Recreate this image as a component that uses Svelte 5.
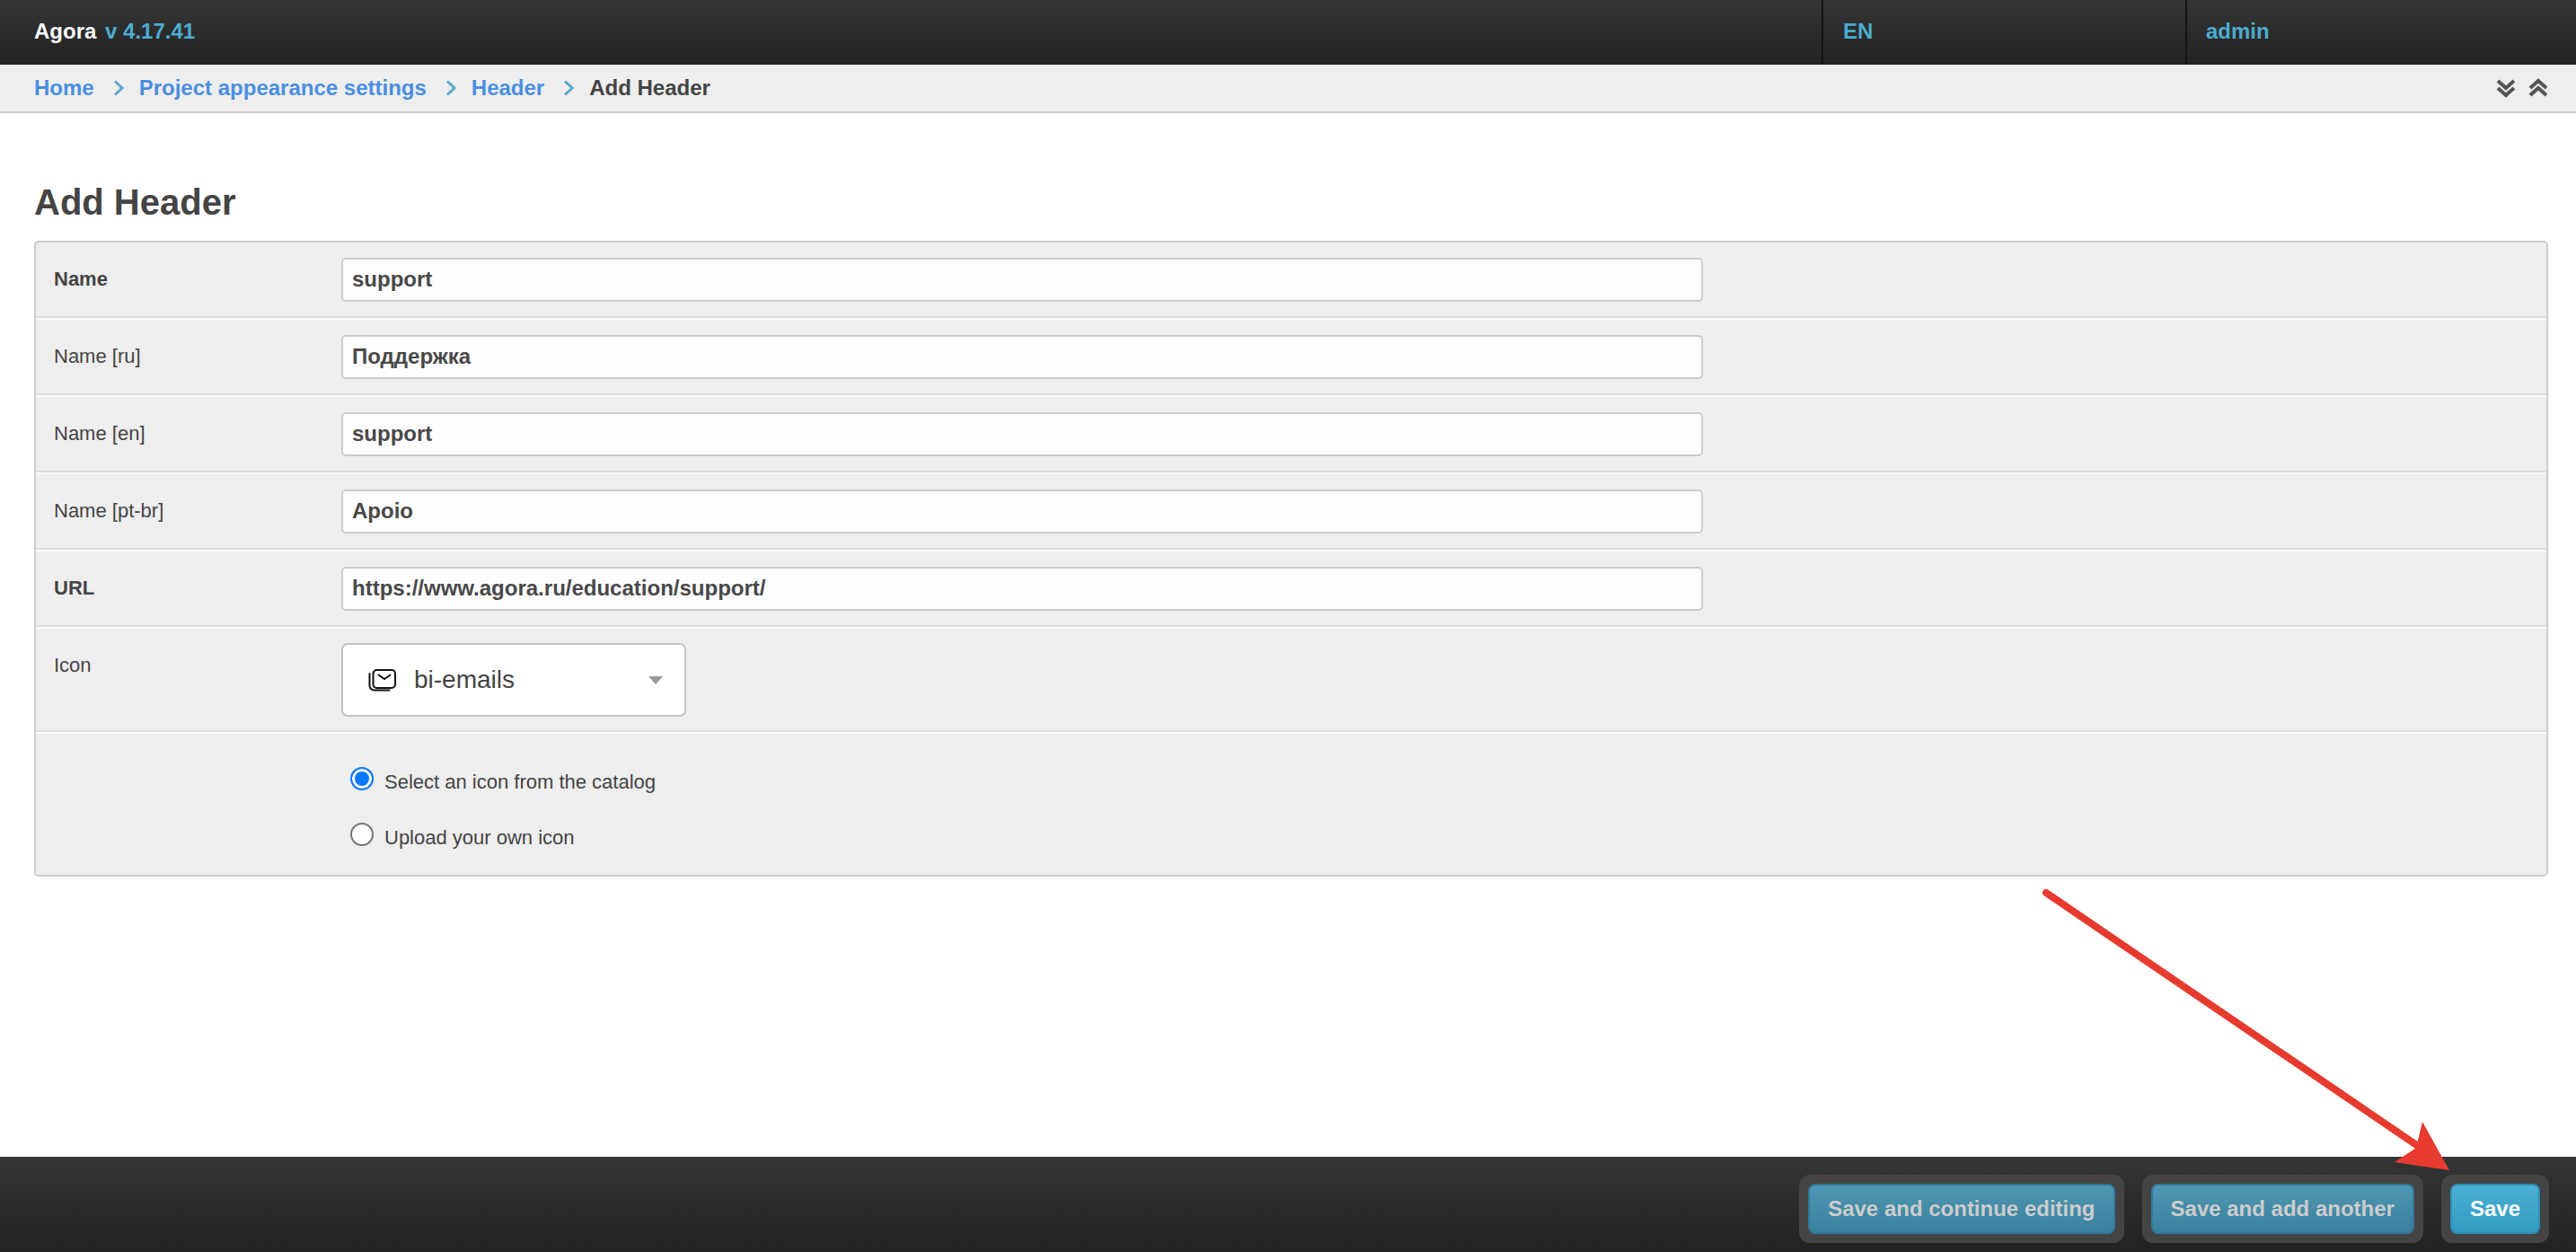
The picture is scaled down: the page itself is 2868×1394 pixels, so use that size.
<script>
	let crumbs = ["Home", "Project appearance settings", "Header"];
	let rows = [
		{ label: "Name", value: "support", strong: true },
		{ label: "Name [ru]", value: "Поддержка" },
		{ label: "Name [en]", value: "support" },
		{ label: "Name [pt-br]", value: "Apoio" },
		{ label: "URL", value: "https://www.agora.ru/education/support/", strong: true },
	];
	let source = $state("catalog");
</script>

<div class="page">
	<header class="topbar">
		<div class="brand"><span class="title">Agora</span> <span class="version">v 4.17.41</span></div>
		<a class="topLink lang" href="#en">EN</a>
		<a class="topLink user" href="#admin">admin</a>
	</header>

	<nav class="breadcrumbs">
		{#each crumbs as crumb}
			<a href="#crumb">{crumb}</a>
			<svg class="sep" viewBox="0 0 12 18" width="12" height="18"><path d="M2 1.5l8 7.5-8 7.5" /></svg>
		{/each}
		<span class="current">Add Header</span>
		<div class="collapse">
			<svg viewBox="0 0 22 22" width="22" height="22"><path d="M2 3l9 8 9-8M2 11l9 8 9-8" /></svg>
			<svg viewBox="0 0 22 22" width="22" height="22"><path d="M2 11l9-8 9 8M2 19l9-8 9 8" /></svg>
		</div>
	</nav>

	<main class="content">
		<h1>Add Header</h1>
		<form class="panel">
			{#each rows as row}
				<div class="row">
					<label class="label" class:strong={row.strong} for={row.label}>{row.label}</label>
					<input id={row.label} class="text" type="text" value={row.value} />
				</div>
			{/each}
			<div class="row iconRow">
				<span class="label">Icon</span>
				<div class="select">
					<svg class="mail" viewBox="0 0 31 25" width="31" height="25">
						<rect x="5.5" y="1" width="24.5" height="20" rx="4" />
						<path d="M11.5 6.5l6.5 4.5 6.5-4.5" />
						<path d="M1.5 5v13.5a5 5 0 0 0 5 5h17" />
					</svg>
					<span class="selectText">bi-emails</span>
					<span class="caret"></span>
				</div>
			</div>
			<div class="row radios">
				<label class="radio"><input type="radio" bind:group={source} value="catalog" /><span>Select an icon from the catalog</span></label>
				<label class="radio"><input type="radio" bind:group={source} value="upload" /><span>Upload your own icon</span></label>
			</div>
		</form>
	</main>

	<footer class="actions">
		<div class="well"><button class="btn muted" type="button">Save and continue editing</button></div>
		<div class="well"><button class="btn muted" type="button">Save and add another</button></div>
		<div class="well"><button class="btn" type="button">Save</button></div>
	</footer>

	<!-- annotation arrow drawn over the page -->
	<svg class="arrow" viewBox="0 0 2868 1394" width="2868" height="1394">
		<line x1="2278" y1="994" x2="2692" y2="1276" />
		<polygon points="2697,1249 2727,1303 2666,1294 2690,1278" />
	</svg>
</div>

<style>
	:global(body) {
		margin: 0;
		background: #fff;
	}

	.page {
		position: relative;
		display: flex;
		flex-direction: column;
		height: 1394px;
		overflow: hidden;
		font-family: "Liberation Sans", Arial, sans-serif;
		color: #444;
	}

	.topbar {
		display: flex;
		align-items: stretch;
		height: 72px;
		flex-shrink: 0;
		background: linear-gradient(#353535, #222);
		font-size: 24px;
		font-weight: bold;
		line-height: 70px;
	}

	.brand {
		width: 2028px;
		padding-left: 38px;
		box-sizing: border-box;
	}

	.title {
		color: #fff;
	}

	.version {
		margin-left: 3px;
		color: #4bacd0;
	}

	.topLink {
		box-sizing: border-box;
		border-left: 2px solid #151515;
		color: #4bacd0;
		text-decoration: none;
	}

	.lang {
		width: 405px;
		padding-left: 22px;
	}

	.user {
		flex: 1;
		padding-left: 21px;
	}

	.breadcrumbs {
		display: flex;
		align-items: center;
		height: 54px;
		flex-shrink: 0;
		box-sizing: border-box;
		padding: 0 31px 0 38px;
		background: #eee;
		border-bottom: 2px solid #ccc;
		font-size: 24px;
		font-weight: bold;
	}

	.breadcrumbs a {
		color: #4a8fe0;
		text-decoration: none;
	}

	.sep {
		margin: 0 17px 0 21px;
		fill: none;
		stroke: #5aa9cc;
		stroke-width: 3;
	}

	.current {
		color: #444;
	}

	.collapse {
		display: flex;
		gap: 14px;
		margin-left: auto;
	}

	.collapse svg {
		fill: none;
		stroke: #555;
		stroke-width: 4;
	}

	.content {
		flex: 1;
		padding: 0 31px 0 38px;
	}

	h1 {
		margin: 0;
		padding-top: 76px;
		font-size: 40px;
		line-height: 46px;
		color: #444;
	}

	.panel {
		margin-top: 20px;
		box-sizing: border-box;
		border: 2px solid #ccc;
		border-radius: 5px;
		background: #eee;
	}

	.row {
		display: flex;
		align-items: center;
		box-sizing: border-box;
		height: 84px;
		margin-bottom: 2px;
		padding-left: 20px;
		border-bottom: 2px solid #ddd;
		box-shadow: 0 2px 0 #fafafa;
	}

	.label {
		width: 320px;
		flex-shrink: 0;
		font-size: 22px;
		color: #444;
	}

	.strong {
		font-weight: bold;
	}

	.text {
		width: 1516px;
		height: 49px;
		box-sizing: border-box;
		padding: 0 10px;
		border: 2px solid #ccc;
		border-radius: 5px;
		background: #fdfdfd;
		font: bold 24px "Liberation Sans", Arial, sans-serif;
		color: #484848;
		outline: none;
	}

	.iconRow {
		align-items: flex-start;
		height: 115px;
		padding-top: 28px;
	}

	.iconRow .label {
		line-height: 26px;
	}

	.select {
		display: flex;
		align-items: center;
		width: 384px;
		height: 82px;
		margin-top: -12px;
		box-sizing: border-box;
		padding: 0 24px 0 28px;
		border: 2px solid #c4c4c4;
		border-radius: 7px;
		background: #fff;
	}

	.mail {
		fill: none;
		stroke: #111;
		stroke-width: 2;
		stroke-linecap: round;
	}

	.selectText {
		margin-left: 20px;
		font-size: 28px;
		color: #444;
	}

	.caret {
		margin-left: auto;
		border-top: 9px solid #999;
		border-left: 8px solid transparent;
		border-right: 8px solid transparent;
	}

	.radios {
		flex-direction: column;
		align-items: flex-start;
		gap: 34px;
		height: 157px;
		margin-bottom: 0;
		padding: 36px 0 0 350px;
		border-bottom: 0;
		box-shadow: none;
	}

	.radio {
		display: flex;
		align-items: center;
		gap: 12px;
		height: 28px;
		font-size: 22px;
		color: #444;
	}

	.radio span {
		position: relative;
		top: 4px;
	}

	.radio input {
		appearance: none;
		width: 26px;
		height: 26px;
		margin: 0;
		box-sizing: border-box;
		border: 2px solid #767676;
		border-radius: 50%;
		background: #fff;
	}

	.radio input:checked {
		border-color: #0b76ff;
		box-shadow: inset 0 0 0 3px #fff;
		background: #0b76ff;
	}

	.actions {
		display: flex;
		justify-content: flex-end;
		gap: 20px;
		height: 106px;
		flex-shrink: 0;
		box-sizing: border-box;
		padding: 20px 30px 0 0;
		background: linear-gradient(#353535, #222);
	}

	.well {
		height: 76px;
		box-sizing: border-box;
		padding: 10px;
		border-radius: 12px;
		background: #444;
	}

	.btn {
		height: 56px;
		padding: 0 20px;
		border: 2px solid #2f8fb5;
		border-radius: 8px;
		background: linear-gradient(#4db0d4, #2f9bc1);
		font: bold 24px "Liberation Sans", Arial, sans-serif;
		color: #fff;
	}

	.muted {
		border-color: #33789a;
		background: linear-gradient(#5097b2, #38809e);
		color: #ccc;
	}

	.arrow {
		position: absolute;
		left: 0;
		top: 0;
		pointer-events: none;
	}

	.arrow line {
		stroke: #e63b2e;
		stroke-width: 8;
		stroke-linecap: round;
	}

	.arrow polygon {
		fill: #e63b2e;
	}
</style>
